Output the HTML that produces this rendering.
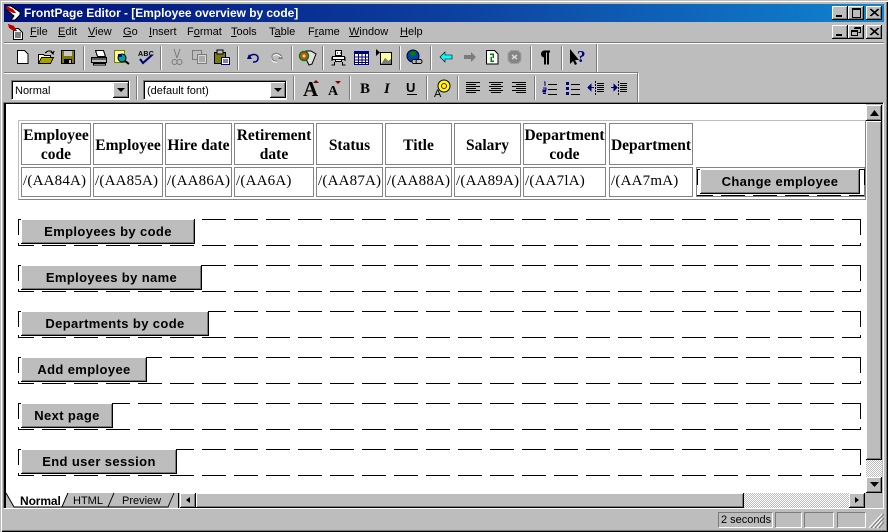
<!DOCTYPE html>
<html><head><meta charset="utf-8"><style>
html,body{margin:0;padding:0;width:888px;height:532px;overflow:hidden;background:#bdbdbd}
*{box-sizing:border-box}
#r{position:relative;width:888px;height:532px;background:#bdbdbd;font-family:"Liberation Sans",sans-serif;overflow:hidden}
.a{position:absolute}
.t{position:absolute;white-space:nowrap;font-size:11px;line-height:14px;color:#000}
.t u{text-decoration:underline}
.wb{position:absolute;width:16px;height:14px;background:#bdbdbd;box-shadow:inset -1px -1px 0 #000,inset 1px 1px 0 #fff,inset -2px -2px 0 #7b7b7b}
.sep{position:absolute;width:2px;background:#fff;border-left:1px solid #7b7b7b}
.c{position:absolute;border:1px solid #848484;background:#fff;font-family:"Liberation Serif",serif;font-size:15.5px;line-height:19px;color:#000;display:flex;align-items:center;justify-content:center;text-align:center;white-space:nowrap;overflow:hidden}
.h{font-weight:bold;padding-top:2px}
.d{justify-content:flex-start;padding-left:1px;padding-bottom:2px;font-size:15px;letter-spacing:.2px}
.btn{position:absolute;background:#bdbdbd;box-shadow:inset -1px -1px 0 #000,inset 1px 1px 0 #fff,inset -2px -2px 0 #7b7b7b;font:bold 13px/25px "Liberation Sans",sans-serif;letter-spacing:.37px;text-align:center;color:#000;white-space:nowrap}
.hatch{position:absolute;background:repeating-conic-gradient(#fff 0 25%,#bdbdbd 0 50%) 0 0/2px 2px}
.pn{position:absolute;top:512px;height:16px;border:1px solid;border-color:#7b7b7b #fff #fff #7b7b7b}
</style></head><body><div id="r">

<div class="a" style="left:0;top:0;width:888px;height:532px;box-shadow:inset 1px 1px 0 #bdbdbd,inset 2px 2px 0 #fff,inset -1px -1px 0 #000,inset -2px -2px 0 #7b7b7b"></div>

<!-- title bar -->
<div class="a" style="left:4px;top:4px;width:880px;height:18px;background:linear-gradient(90deg,#00107b 0%,#0d3f9e 50%,#1084d0 100%)"></div>
<div class="t" style="left:24px;top:5px;color:#fff;font-weight:bold;font-size:12px;line-height:16px;letter-spacing:-.04px">FrontPage Editor - [Employee overview by code]</div>

<!-- window buttons -->
<div class="wb" style="left:832px;top:6px"></div><div class="wb" style="left:848px;top:6px"></div><div class="wb" style="left:866px;top:6px"></div>
<div class="wb" style="left:832px;top:25px"></div><div class="wb" style="left:848px;top:25px"></div><div class="wb" style="left:866px;top:25px"></div>

<!-- menu -->
<div class="t" style="left:30px;top:25px"><u>F</u>ile</div>
<div class="t" style="left:58px;top:25px"><u>E</u>dit</div>
<div class="t" style="left:88px;top:25px"><u>V</u>iew</div>
<div class="t" style="left:123px;top:25px"><u>G</u>o</div>
<div class="t" style="left:149px;top:25px"><u>I</u>nsert</div>
<div class="t" style="left:187px;top:25px">F<u>o</u>rmat</div>
<div class="t" style="left:231px;top:25px"><u>T</u>ools</div>
<div class="t" style="left:269px;top:25px">T<u>a</u>ble</div>
<div class="t" style="left:308px;top:25px">F<u>r</u>ame</div>
<div class="t" style="left:349px;top:25px"><u>W</u>indow</div>
<div class="t" style="left:400px;top:25px"><u>H</u>elp</div>

<!-- toolbar frame lines -->
<div class="a" style="left:4px;top:42px;width:880px;height:1px;background:#7b7b7b"></div>
<div class="a" style="left:4px;top:43px;width:880px;height:1px;background:#fff"></div>
<div class="a" style="left:4px;top:72px;width:634px;height:1px;background:#7b7b7b"></div>
<div class="a" style="left:4px;top:73px;width:634px;height:1px;background:#fff"></div>
<div class="a" style="left:596px;top:44px;width:1px;height:28px;background:#7b7b7b"></div>
<div class="a" style="left:597px;top:44px;width:1px;height:28px;background:#fff"></div>
<div class="a" style="left:637px;top:73px;width:1px;height:29px;background:#7b7b7b"></div>
<div class="a" style="left:638px;top:73px;width:1px;height:29px;background:#fff"></div>

<!-- toolbar separators -->
<div class="sep" style="left:83px;top:46px;height:24px"></div>
<div class="sep" style="left:160px;top:46px;height:24px"></div>
<div class="sep" style="left:237px;top:46px;height:24px"></div>
<div class="sep" style="left:291px;top:46px;height:24px"></div>
<div class="sep" style="left:322px;top:46px;height:24px"></div>
<div class="sep" style="left:399px;top:46px;height:24px"></div>
<div class="sep" style="left:430px;top:46px;height:24px"></div>
<div class="sep" style="left:530px;top:46px;height:24px"></div>
<div class="sep" style="left:561px;top:46px;height:24px"></div>
<div class="sep" style="left:136px;top:76px;height:24px"></div>
<div class="sep" style="left:293px;top:76px;height:24px"></div>
<div class="sep" style="left:349px;top:76px;height:24px"></div>
<div class="sep" style="left:426px;top:76px;height:24px"></div>
<div class="sep" style="left:457px;top:76px;height:24px"></div>
<div class="sep" style="left:534px;top:76px;height:24px"></div>

<!-- combos -->
<div class="a" style="left:11px;top:80px;width:119px;height:20px;background:#fff;border:1px solid;border-color:#7b7b7b #fff #fff #7b7b7b;box-shadow:inset 1px 1px 0 #000"></div>
<div class="t" style="left:15px;top:84px">Normal</div>
<div class="wb" style="left:113px;top:82px;width:16px;height:16px"></div>
<div class="a" style="left:143px;top:80px;width:144px;height:20px;background:#fff;border:1px solid;border-color:#7b7b7b #fff #fff #7b7b7b;box-shadow:inset 1px 1px 0 #000"></div>
<div class="t" style="left:147px;top:84px">(default font)</div>
<div class="wb" style="left:270px;top:82px;width:16px;height:16px"></div>

<!-- editor -->
<div class="a" style="left:3px;top:102px;width:881px;height:407px;border:1px solid;border-color:#7b7b7b #fff #fff #7b7b7b"></div>
<div class="a" style="left:4px;top:103px;width:879px;height:405px;background:#000"></div>
<div class="a" style="left:6px;top:104px;width:860px;height:389px;background:#fff"></div>

<!-- table -->
<div class="a" style="left:18px;top:120px;width:848px;height:80px;border:1px solid;border-color:#bdbdbd #848484 #848484 #bdbdbd"></div>
<div class="c h" style="left:21px;top:123px;width:70px;height:42px">Employee<br>code</div>
<div class="c h" style="left:93px;top:123px;width:70px;height:42px">Employee</div>
<div class="c h" style="left:165px;top:123px;width:67px;height:42px">Hire date</div>
<div class="c h" style="left:234px;top:123px;width:80px;height:42px">Retirement<br>date</div>
<div class="c h" style="left:316px;top:123px;width:67px;height:42px">Status</div>
<div class="c h" style="left:385px;top:123px;width:67px;height:42px">Title</div>
<div class="c h" style="left:454px;top:123px;width:67px;height:42px">Salary</div>
<div class="c h" style="left:523px;top:123px;width:83px;height:42px">Department<br>code</div>
<div class="c h" style="left:609px;top:123px;width:84px;height:42px">Department</div>

<div class="c d" style="left:21px;top:167px;width:70px;height:30px">/(AA84A)</div>
<div class="c d" style="left:93px;top:167px;width:70px;height:30px">/(AA85A)</div>
<div class="c d" style="left:165px;top:167px;width:67px;height:30px">/(AA86A)</div>
<div class="c d" style="left:234px;top:167px;width:80px;height:30px">/(AA6A)</div>
<div class="c d" style="left:316px;top:167px;width:67px;height:30px">/(AA87A)</div>
<div class="c d" style="left:385px;top:167px;width:67px;height:30px">/(AA88A)</div>
<div class="c d" style="left:454px;top:167px;width:67px;height:30px">/(AA89A)</div>
<div class="c d" style="left:523px;top:167px;width:83px;height:30px">/(AA7lA)</div>
<div class="c d" style="left:609px;top:167px;width:84px;height:30px">/(AA7mA)</div>
<div class="a" style="left:696px;top:167px;width:169px;height:30px;border:1px solid #848484;background:#fff"></div>

<!-- dashed form boxes + icons -->
<svg class="a" style="left:0;top:0" width="888" height="532" viewBox="0 0 888 532" shape-rendering="crispEdges">
<defs>
<g id="frm">
<line x1="18.5" y1="0" x2="18.5" y2="27" stroke="#000" stroke-dasharray="16 8"/>
<line x1="860.5" y1="0" x2="860.5" y2="27" stroke="#000" stroke-dasharray="16 8"/>
<line x1="18" y1="0.5" x2="24" y2="0.5" stroke="#000"/>
<line x1="42" y1="0.5" x2="860" y2="0.5" stroke="#000" stroke-dasharray="24 8"/>
<line x1="18" y1="26.5" x2="860" y2="26.5" stroke="#000" stroke-dasharray="24 8" stroke-dashoffset="8"/>
</g>
</defs>
<use href="#frm" y="219"/><use href="#frm" y="265"/><use href="#frm" y="311"/>
<use href="#frm" y="357"/><use href="#frm" y="403"/><use href="#frm" y="449"/>
<!-- change employee frame -->
<path d="M697.500 185V169.500H703M860 169.500H864.500V185" fill="none" stroke="#000"/>
<line x1="697" y1="195.500" x2="864" y2="195.500" stroke="#000" stroke-dasharray="24 8" stroke-dashoffset="8"/>

<!-- title app icon -->
<path d="M7 6h4l9 6v3l-5 5h-4l3-4-7-6z" fill="#fff" stroke="#000"/>
<path d="M6 6l7 3 3 4-3 0-6-3z" fill="#c00000"/>
<!-- menu doc icon -->
<path d="M13.500 28.500h5l4 4v7h-9z" fill="#fff" stroke="#000"/>
<path d="M15 33h6M15 35h6M15 37h6" stroke="#000"/>
<path d="M8 24l6 2 3 5-3 0-5-3z" fill="#c00000"/>

<!-- win buttons glyphs -->
<rect x="836" y="15" width="6" height="2" fill="#000"/>
<path d="M852.500 9v8.500h8V9" fill="none" stroke="#000"/><rect x="852" y="8" width="9" height="2" fill="#000"/>
<path d="M870 9l8 7M878 9l-8 7M871 9l8 7M879 9l-8 7" stroke="#000" fill="none" shape-rendering="auto"/>
<rect x="836" y="34" width="6" height="2" fill="#000"/>
<path d="M854.500 27.500h6v5h-2M851.500 30.500h6v5h-6z" fill="none" stroke="#000"/><rect x="854" y="28" width="7" height="1"/><rect x="851" y="31" width="7" height="1"/>
<path d="M870 28l8 7M878 28l-8 7M871 28l8 7M879 28l-8 7" stroke="#000" fill="none" shape-rendering="auto"/>

<!-- combo arrows -->
<path d="M117 88h8l-4 4z" fill="#000" shape-rendering="auto"/>
<path d="M274 88h8l-4 4z" fill="#000" shape-rendering="auto"/>

<!-- new -->
<path d="M17.500 50.500h7l3.500 3.500v9.500h-10.500z" fill="#fff" stroke="#000"/>
<!-- open -->
<path d="M38.500 54.500h5l1 1h6v8h-12z" fill="#ffff9c" stroke="#000"/>
<path d="M38.500 63.500l3-6h12l-3 6z" fill="#a8a000" stroke="#000"/>
<path d="M45 53l3-2h3l2 2M51 52l2 2 1-3" fill="none" stroke="#000"/>
<!-- save -->
<rect x="61.500" y="50.500" width="13" height="13" fill="#7b7b00" stroke="#000"/>
<rect x="64" y="51" width="8" height="5" fill="#c8c8c8"/>
<rect x="64" y="59" width="8" height="4" fill="#000"/><rect x="69" y="60" width="2" height="3" fill="#bdbdbd"/>
<!-- print -->
<path d="M95.500 50.500h8l2 6h-8z" fill="#fff" stroke="#000"/>
<path d="M91.500 57.500h15v5h-15z" fill="#bdbdbd" stroke="#000"/>
<path d="M93.500 63.500h12v1.500h-12z" fill="#fff" stroke="#000"/><path d="M92 59h14" stroke="#000"/>
<!-- preview -->
<rect x="114.500" y="50.500" width="10" height="12" fill="#ffff9c" stroke="#7b7b00"/>
<circle cx="122" cy="58" r="4" fill="#00a0a0" stroke="#000" shape-rendering="auto"/>
<path d="M118 54h4v3h-4z" fill="#00007b"/><path d="M125 61l4 3" stroke="#000" stroke-width="2" shape-rendering="auto"/>
<!-- spell -->
<text x="138" y="56" font-family="Liberation Sans" font-size="7" font-weight="bold" fill="#000" letter-spacing=".3">ABC</text>
<path d="M140 59l3 4 9-8" fill="none" stroke="#00007b" stroke-width="2" shape-rendering="auto"/>
<!-- cut -->
<path d="M174 49l3 9M180 49l-3 9" stroke="#7b7b7b" fill="none" shape-rendering="auto"/><circle cx="174.500" cy="62" r="2.500" fill="none" stroke="#7b7b7b" shape-rendering="auto"/><circle cx="179.500" cy="62" r="2.500" fill="none" stroke="#7b7b7b" shape-rendering="auto"/>
<!-- copy -->
<rect x="192.500" y="50.500" width="9" height="9" fill="#bdbdbd" stroke="#7b7b7b"/><rect x="197.500" y="54.500" width="9" height="9" fill="#d8d8d8" stroke="#7b7b7b"/><path d="M199 57h6M199 59h6M199 61h6" stroke="#7b7b7b"/>
<!-- paste -->
<rect x="214.500" y="52.500" width="11" height="11" fill="#7b7b00" stroke="#000"/><rect x="217" y="50" width="6" height="4" fill="#bdbdbd" stroke="#000"/><rect x="221.500" y="57.500" width="8" height="7" fill="#fff" stroke="#00007b"/><path d="M223 60h5M223 62h5" stroke="#00007b"/>
<!-- undo/redo -->
<path d="M249 54l-2 5 5 0z" fill="#00007b" shape-rendering="auto"/><path d="M249 57c3-4 9-3 9 1s-3 4-5 4" fill="none" stroke="#00007b" stroke-width="1.500" shape-rendering="auto"/>
<path d="M281 54l2 5-5 0z" fill="#7b7b7b" shape-rendering="auto"/><path d="M281 57c-3-4-9-3-9 1s3 4 5 4" fill="none" stroke="#fff" stroke-width="1.500" shape-rendering="auto"/><path d="M281 56c-3-4-9-3-9 1s3 4 5 4" fill="none" stroke="#7b7b7b" stroke-width="1.200" shape-rendering="auto"/>
<!-- hyperlink-ish -->
<path d="M306 51h5l5 3-4 10-3 1-3-6z" fill="#e0e0e0" stroke="#000" shape-rendering="auto"/>
<circle cx="304" cy="56" r="4.500" fill="#d04040" stroke="#008000" stroke-width="1.500" shape-rendering="auto"/><circle cx="304" cy="56" r="1.500" fill="#ffff00" shape-rendering="auto"/>
<!-- robot -->
<rect x="335.500" y="50.500" width="6" height="5" fill="#fff" stroke="#000"/><rect x="332.500" y="56.500" width="12" height="3" fill="#fff" stroke="#000"/><rect x="335.500" y="59.500" width="6" height="2" fill="#fff" stroke="#000"/><path d="M334.500 62v3h-3M342.500 62v3h3M332 57v4M345 57v4" stroke="#000" fill="none"/><path d="M337 53h1M340 53h1" stroke="#000"/>
<!-- table -->
<rect x="354.500" y="51.500" width="14" height="13" fill="#fff" stroke="#00007b"/><rect x="354" y="51" width="15" height="3" fill="#00007b"/><path d="M355 57h13M355 60h13M355 62.500h13M358.500 54v10M362 54v10M365.500 54v10" stroke="#00007b"/>
<!-- image -->
<path d="M376 49v7l4-3.500z" fill="#000" shape-rendering="auto"/><rect x="380.500" y="52.500" width="11" height="12" fill="#ffff9c" stroke="#000"/><path d="M381 64l4-6 3 3 3-2v5z" fill="#7b7b7b"/>
<!-- globe -->
<circle cx="413" cy="56" r="6" fill="#0040c0" stroke="#000" shape-rendering="auto"/><path d="M410 52l5-1 1 4-5 2z" fill="#008000"/><rect x="412" y="59.500" width="6" height="4" rx="2" fill="#bdbdbd" stroke="#000"/><rect x="416" y="59.500" width="6" height="4" rx="2" fill="#bdbdbd" stroke="#000"/>
<!-- nav -->
<path d="M440 57l5-5v3h7v4h-7v3z" fill="#00ffff" stroke="#000" stroke-width=".6" shape-rendering="auto"/>
<path d="M476 57l-5-5v3h-7v4h7v3z" fill="#7b7b7b" shape-rendering="auto"/>
<!-- refresh -->
<path d="M486.500 50.500h8l3.500 3.500v10h-11.500z" fill="#fff" stroke="#000"/><path d="M490 54h3v4M494 61h-3v-4" fill="none" stroke="#008000" stroke-width="1.500"/>
<!-- stop -->
<path d="M511 50.500h7l3 3v7l-3 3h-7l-3-3v-7z" fill="#848484" stroke="#a0a0a0" shape-rendering="auto"/><path d="M512 55l5 4M517 55l-5 4" stroke="#d8d8d8" stroke-width="1.500" shape-rendering="auto"/>
<!-- pilcrow -->
<path d="M541 54a3.500 3.500 0 0 1 3.500-3.500H550v2h-1v12h-2v-12h-1v12h-2v-7a3.500 3.500 0 0 1-3-3.500z" fill="#000" shape-rendering="auto"/>
<!-- help -->
<path d="M570 49v15l3-3 2 4 2-1-2-4h4z" fill="#000" shape-rendering="auto"/>
<text x="577" y="62" font-family="Liberation Serif" font-weight="bold" font-size="17" fill="#00007b">?</text>

<!-- font size A -->
<text x="303" y="96" font-family="Liberation Serif" font-weight="bold" font-size="21" fill="#000">A</text>
<path d="M313 83h6l-3-3z" fill="#7b0000" shape-rendering="auto"/>
<text x="328" y="95" font-family="Liberation Serif" font-weight="bold" font-size="14" fill="#000">A</text>
<path d="M335 81h6l-3 3z" fill="#7b0000" shape-rendering="auto"/>
<text x="360" y="93" font-family="Liberation Serif" font-weight="bold" font-size="15" fill="#000">B</text>
<text x="384" y="93" font-family="Liberation Serif" font-weight="bold" font-style="italic" font-size="15" fill="#000">I</text>
<text x="406" y="92" font-family="Liberation Sans" font-weight="bold" font-size="13" fill="#000">U</text>
<rect x="407" y="94" width="10" height="1" fill="#000"/>

<!-- format-stuff -->
<circle cx="444" cy="86" r="6" fill="#ffff00" stroke="#000" shape-rendering="auto"/><circle cx="444" cy="86" r="2.500" fill="none" stroke="#7b0000" shape-rendering="auto"/>
<text x="434" y="97" font-family="Liberation Sans" font-size="11" fill="#000">A</text>

<!-- align -->
<path d="M466 82.500h14M466 84.500h10M466 86.500h14M466 88.500h10M466 90.500h14M466 92.500h10" stroke="#000"/>
<path d="M489 82.500h14M491 84.500h10M489 86.500h14M491 88.500h10M489 90.500h14M491 92.500h10" stroke="#000"/>
<path d="M512 82.500h14M516 84.500h10M512 86.500h14M516 88.500h10M512 90.500h14M516 92.500h10" stroke="#000"/>
<!-- lists -->
<path d="M544 82h1v4M543 88h3v2h-3v2h3M543 91h3" fill="none" stroke="#00007b"/><rect x="543" y="93" width="3" height="1" fill="#00007b"/>
<path d="M548 84.500h9M548 89.500h9M548 94.500h9" stroke="#000"/>
<rect x="566" y="82" width="3" height="3" fill="#00007b"/><rect x="566" y="87" width="3" height="3" fill="#00007b"/><rect x="566" y="92" width="3" height="3" fill="#00007b"/>
<path d="M571 84.500h9M571 89.500h9M571 94.500h9" stroke="#000"/>
<path d="M588 87.500l3-3v6zM591 87.500h3" fill="#00007b" stroke="#00007b"/><path d="M595.500 81v15" stroke="#000" stroke-dasharray="2 1"/><path d="M597 83.500h7M597 85.500h7M597 87.500h7M597 89.500h7M597 91.500h7" stroke="#000"/>
<path d="M617 87.500l-3-3v6zM611 87.500h4" fill="#00007b" stroke="#00007b"/><path d="M618.500 81v15" stroke="#000" stroke-dasharray="2 1"/><path d="M620 83.500h7M620 85.500h7M620 87.500h7M620 89.500h7M620 91.500h7" stroke="#000"/>
</svg>

<!-- form buttons -->
<div class="btn" style="left:21px;top:219px;width:174px;height:25px">Employees by code</div>
<div class="btn" style="left:21px;top:265px;width:181px;height:25px">Employees by name</div>
<div class="btn" style="left:21px;top:311px;width:188px;height:25px">Departments by code</div>
<div class="btn" style="left:21px;top:357px;width:126px;height:25px">Add employee</div>
<div class="btn" style="left:21px;top:403px;width:92px;height:25px">Next page</div>
<div class="btn" style="left:21px;top:449px;width:156px;height:25px">End user session</div>
<div class="btn" style="left:700px;top:169px;width:160px;height:25px">Change employee</div>

<!-- vertical scrollbar -->
<div class="a" style="left:866px;top:104px;width:17px;height:389px;background:#bdbdbd"></div>
<div class="wb" style="left:866px;top:105px;width:16px;height:16px"></div>
<div class="wb" style="left:866px;top:121px;width:16px;height:339px"></div>
<div class="hatch" style="left:866px;top:460px;width:16px;height:17px"></div>
<div class="wb" style="left:866px;top:477px;width:16px;height:16px"></div>

<!-- tabs + hscroll -->
<div class="a" style="left:6px;top:493px;width:877px;height:15px;background:#bdbdbd"></div>
<div class="hatch" style="left:744px;top:493px;width:105px;height:15px"></div>
<div class="wb" style="left:180px;top:493px;width:16px;height:15px"></div>
<div class="wb" style="left:196px;top:493px;width:548px;height:15px"></div>
<div class="wb" style="left:849px;top:493px;width:16px;height:15px"></div>
<svg class="a" style="left:0;top:0" width="888" height="532" viewBox="0 0 888 532">
<path d="M6 493L14 507H62L68 493" fill="#fff" stroke="#000"/>
<path d="M68 493L62 507H108L114 493" fill="#bdbdbd" stroke="#000" stroke-width=".9"/>
<path d="M114 493L108 507H168L174 493" fill="#bdbdbd" stroke="#000" stroke-width=".9"/>
<rect x="178" y="493" width="1" height="15" fill="#000"/>
<path d="M870 116h9l-4.500-6z" fill="#000"/>
<path d="M870 482h9l-4.500 5z" fill="#000"/>
<path d="M190 497v6l-4-3z" fill="#000"/>
<path d="M855 497v6l4-3z" fill="#000"/>
<path d="M884 514l-13 14M884 518l-9 10M884 522l-5 6" stroke="#7b7b7b" fill="none"/>
<path d="M882 514l-13 14M882 518l-9 10M882 522l-5 6" stroke="#fff" fill="none"/>
</svg>
<div class="t" style="left:20px;top:494px;font-weight:bold;font-size:12px;letter-spacing:-.1px">Normal</div>
<div class="t" style="left:73px;top:494px">HTML</div>
<div class="t" style="left:122px;top:494px">Preview</div>

<!-- status bar -->
<div class="pn" style="left:718px;width:55px"></div>
<div class="pn" style="left:775px;width:27px"></div>
<div class="pn" style="left:804px;width:30px"></div>
<div class="pn" style="left:837px;width:29px"></div>
<div class="t" style="left:721px;top:513px">2 seconds</div>
</div></body></html>
